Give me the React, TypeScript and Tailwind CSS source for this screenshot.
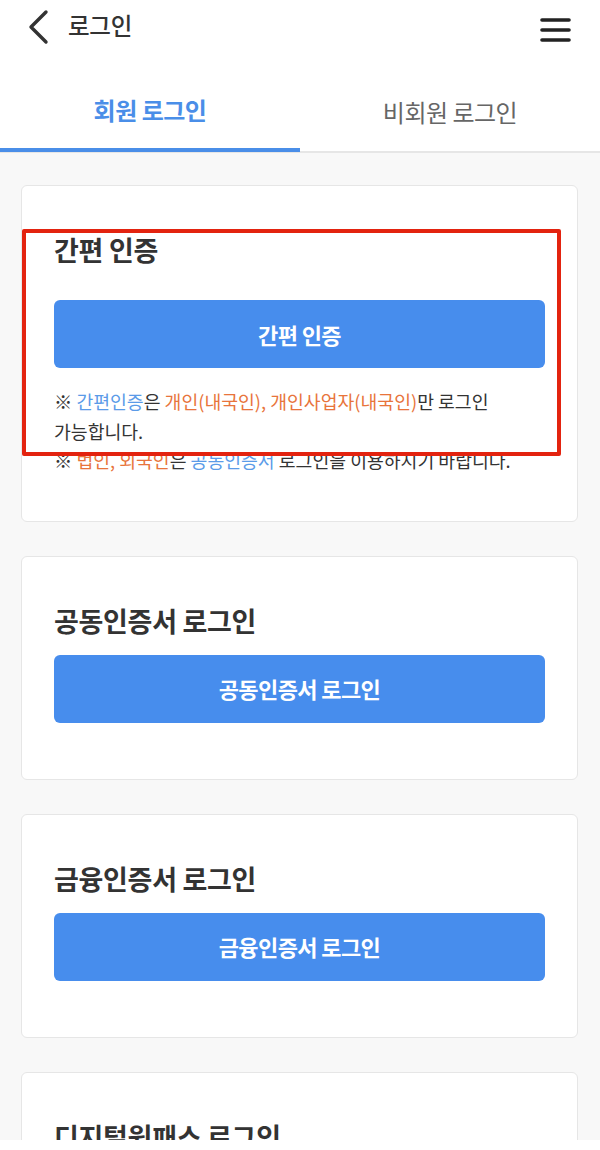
import React from "react";

const font = { fontFamily: '"Noto Sans CJK KR", "Noto Sans", sans-serif' };

function Card({ title, button, children, gapClass }: { title: string; button: string; children?: React.ReactNode; gapClass: string }) {
  return (
    <div className="relative mx-[21px] w-[557px] shrink-0 rounded-[6px] border border-[#e6e6e6] bg-white px-8 pt-[46px]">
      <div className="text-[27px] font-bold leading-[36px] tracking-[-0.3px] text-[#333333]">{title}</div>
      <div className={`${gapClass} flex h-[68px] items-center justify-center rounded-[6px] bg-[#478ded] text-[22px] font-bold tracking-[-0.6px] text-white`}>
        {button}
      </div>
      {children}
    </div>
  );
}

export default function App() {
  return (
    <div style={font} className="w-[600px] bg-white">
      <div className="flex h-[1140px] flex-col overflow-hidden bg-[#f8f8f8]">
        {/* header */}
        <div className="flex h-[56px] shrink-0 items-center bg-white pl-[26px] pr-[28px]">
          <svg width="26" height="36" viewBox="0 0 26 36" className="mt-[-2px]">
            <path d="M20 3 L5 18 L20 33" fill="none" stroke="#333" strokeWidth="3.4" strokeLinecap="round" strokeLinejoin="round" />
          </svg>
          <div className="ml-[16px] mt-[-4px] text-[23.5px] font-medium tracking-[-0.3px] text-[#333]">로그인</div>
          <div className="flex-1" />
          <svg width="32" height="28" viewBox="0 0 32 28" className="mt-[4px]">
            <g stroke="#222" strokeWidth="3.6" strokeLinecap="round">
              <line x1="2" y1="4" x2="29" y2="4" />
              <line x1="2" y1="14" x2="29" y2="14" />
              <line x1="2" y1="24" x2="29" y2="24" />
            </g>
          </svg>
        </div>
        {/* tabs */}
        <div className="flex h-[97px] shrink-0 bg-white">
          <div className="flex w-[300px] flex-col">
            <div className="flex flex-1 items-center justify-center pt-[16px] text-[24px] font-bold tracking-[-0.5px] text-[#4a8ee8]">회원 로그인</div>
            <div className="h-[4px] bg-[#4a8ee8]" />
            <div className="h-[1px] bg-[#e6e6e6]" />
          </div>
          <div className="flex w-[300px] flex-col">
            <div className="flex flex-1 items-center justify-center pt-[16px] text-[24px] tracking-[-0.5px] text-[#666]">비회원 로그인</div>
            <div className="h-[2px] bg-[#e6e6e6]" />
          </div>
        </div>
        {/* content */}
        <div className="flex flex-col gap-[34px] pt-[32px]">
          <Card title="간편 인증" button="간편 인증" gapClass="mt-[32px]">
            <div className="mt-[19px] break-keep pb-[45px] text-[18.3px] leading-[29.5px] text-[#333]">
              <div>
                ※ <span className="text-[#5b9be8]">간편인증</span>은 <span className="text-[#e8743b]">개인(내국인), 개인사업자(내국인)</span>만 로그인 가능합니다.
              </div>
              <div>
                ※ <span className="text-[#e8743b]">법인, 외국인</span>은 <span className="text-[#5b9be8]">공동인증서</span> 로그인을 이용하시기 바랍니다.
              </div>
            </div>
            <div className="pointer-events-none absolute left-[0px] top-[43px] h-[227px] w-[539px] rounded-[2px] border-[4px] border-[#e3230f]" />
          </Card>
          <Card title="공동인증서 로그인" button="공동인증서 로그인" gapClass="mt-[16px] mb-[56px]" />
          <Card title="금융인증서 로그인" button="금융인증서 로그인" gapClass="mt-[16px] mb-[56px]" />
          <Card title="디지털원패스 로그인" button="디지털원패스 로그인" gapClass="mt-[16px] mb-[56px]" />
        </div>
      </div>
    </div>
  );
}
